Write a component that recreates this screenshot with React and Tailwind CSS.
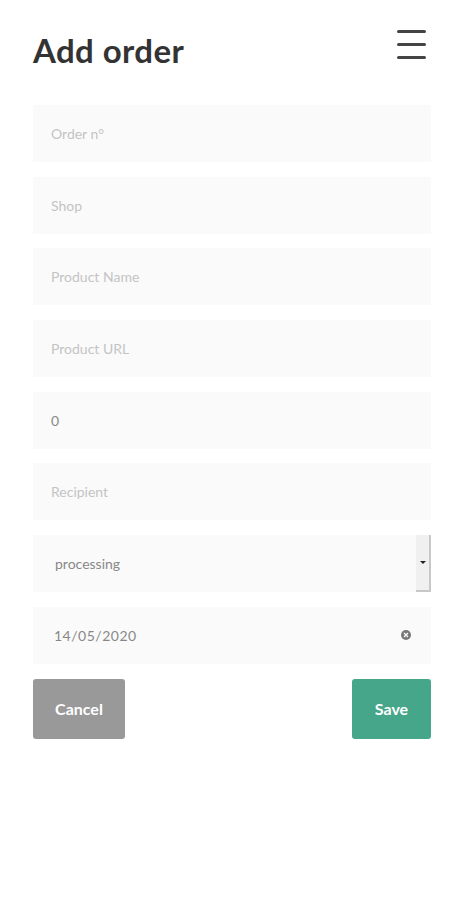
import React, { useState } from "react";

const fields = [
  { placeholder: "Order n°", value: "" },
  { placeholder: "Shop", value: "" },
  { placeholder: "Product Name", value: "" },
  { placeholder: "Product URL", value: "" },
  { placeholder: "Price", value: "0" },
  { placeholder: "Recipient", value: "" },
];

const App = () => {
  const [values, setValues] = useState(fields.map((f) => f.value));

  return (
    <div
      className="w-full min-h-screen bg-white pl-[33px] pr-[32px] pt-[26px]"
      style={{ fontFamily: "Lato, 'Open Sans', sans-serif" }}
    >
      {/* Header */}
      <div className="flex items-start justify-between">
        <h1 className="text-[33px] font-bold text-[#333] leading-[48px] tracking-[0.4px]">
          Add order
        </h1>
        <button className="mr-[5px] mt-[4px] flex flex-col gap-[10.5px]">
          <span className="block h-[2.5px] w-[29px] bg-[#444] rounded"></span>
          <span className="block h-[2.5px] w-[29px] bg-[#444] rounded"></span>
          <span className="block h-[2.5px] w-[29px] bg-[#444] rounded"></span>
        </button>
      </div>

      {/* Form */}
      <div className="mt-[31px] flex flex-col gap-[14.7px]">
        {fields.map((field, index) => (
          <input
            key={index}
            value={values[index]}
            placeholder={field.placeholder}
            onChange={(e) => {
              const next = [...values];
              next[index] = e.target.value;
              setValues(next);
            }}
            className="h-[57px] w-full bg-[#fafafa] px-[18px] text-[14px] text-[#888] placeholder:text-[#c4c4c4] outline-none"
          />
        ))}

        {/* Status select */}
        <div className="flex h-[57px] w-full bg-[#fafafa]">
          <div className="flex flex-1 items-center pl-[22px] text-[14px] text-[#888]">
            processing
          </div>
          <div className="flex w-[15px] items-center justify-center border-r-2 border-b-2 border-[#c8c8c8] bg-[#f0f0f0]">
            <span className="block h-0 w-0 border-x-[3px] border-t-[3px] border-x-transparent border-t-[#222]"></span>
          </div>
        </div>

        {/* Date */}
        <div className="flex h-[57px] w-full items-center justify-between bg-[#fafafa] pl-[21px] pr-[20px]">
          <span className="text-[14px] text-[#888] tracking-[0.5px]">
            14/05/2020
          </span>
          <span className="flex h-[10px] w-[10px] items-center justify-center rounded-full bg-[#777]">
            <svg width="6" height="6" viewBox="0 0 6 6">
              <path d="M1 1L5 5M5 1L1 5" stroke="#fafafa" strokeWidth="1.3" />
            </svg>
          </span>
        </div>
      </div>

      {/* Actions */}
      <div className="mt-[14.7px] flex items-center justify-between">
        <button className="h-[60px] w-[92px] rounded-[3px] bg-[#999] text-[16px] font-bold text-white">
          Cancel
        </button>
        <button className="h-[60px] w-[79px] rounded-[3px] bg-[#45a68a] text-[16px] font-bold text-white">
          Save
        </button>
      </div>
    </div>
  );
};

export default App;
